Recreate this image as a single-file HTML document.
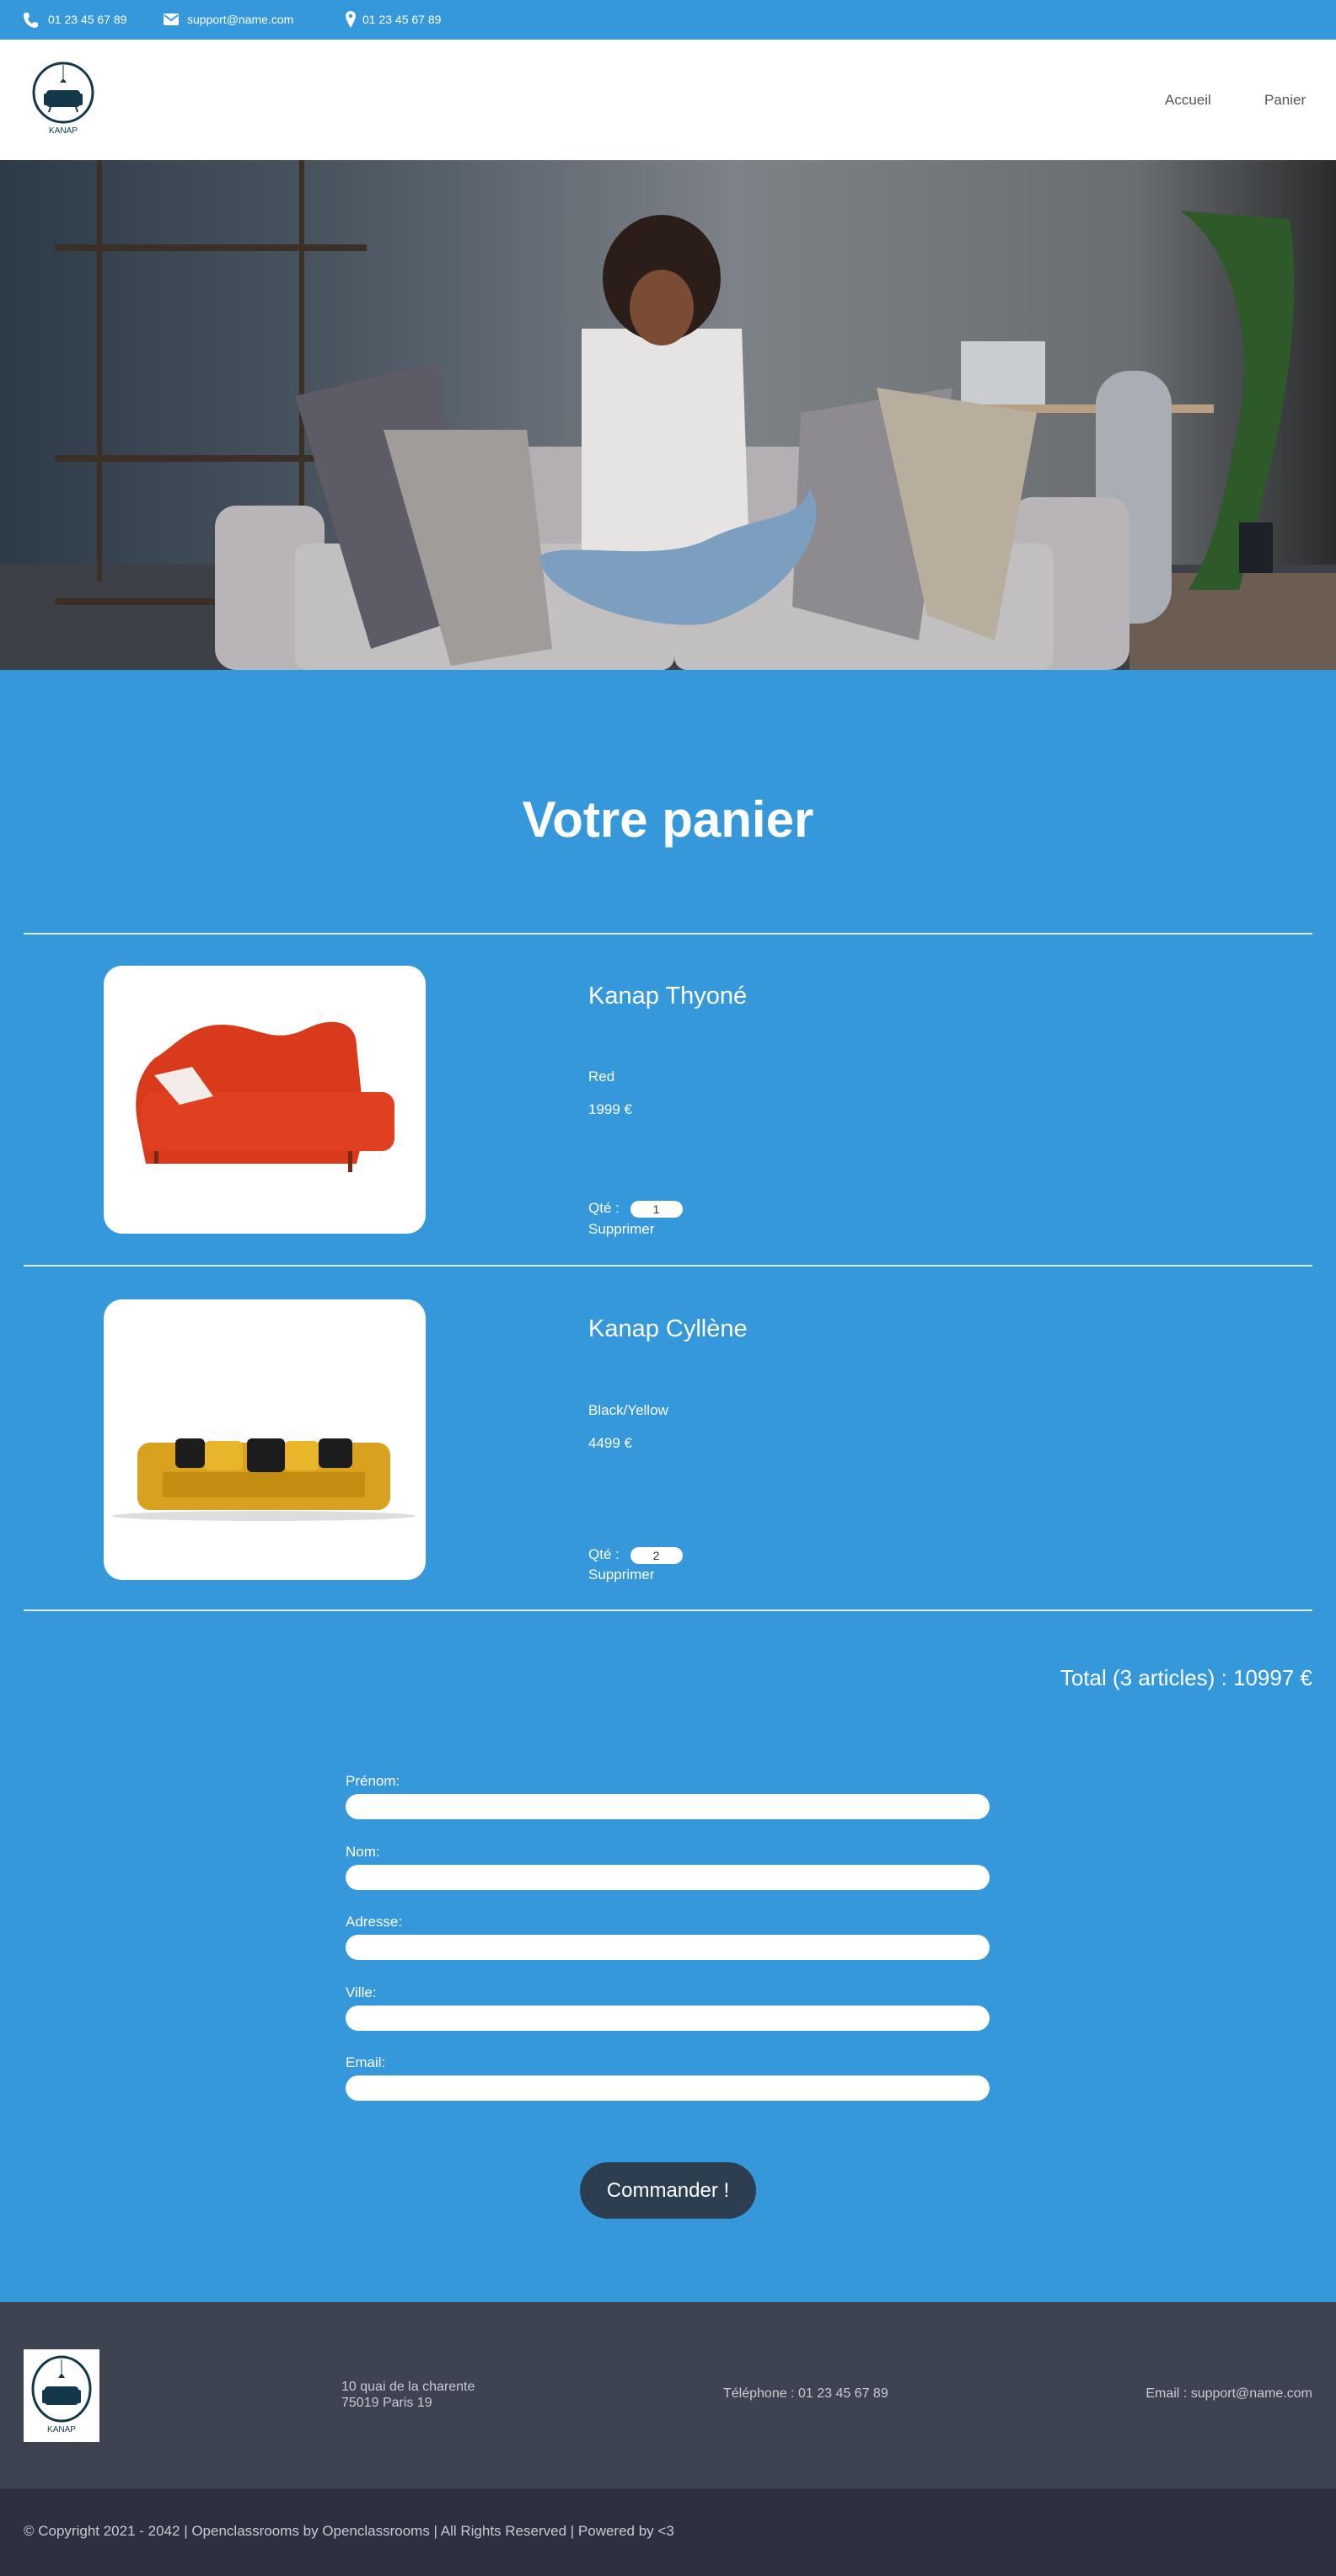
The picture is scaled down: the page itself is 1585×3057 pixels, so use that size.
<!DOCTYPE html>
<html><head><meta charset="utf-8">
<style>
*{margin:0;padding:0;box-sizing:border-box}
body{width:1585px;height:3057px;font-family:"Liberation Sans",sans-serif;background:#3498db;color:#fff;position:relative;overflow:hidden}
.abs{position:absolute}
.top{left:0;top:0;width:1585px;height:47px;background:#3498db;font-size:14px}
.top span{position:absolute;top:15px}
.head{left:0;top:47px;width:1585px;height:143px;background:#fff}
.nav{font-size:17px;color:#555;top:109px}
.hero{left:0;top:190px;width:1585px;height:605px;overflow:hidden}
h1{position:absolute;left:0;width:1585px;text-align:center;top:938px;font-size:60px;font-weight:bold}
.line{left:28px;width:1529px;height:2px;background:#dfeefa}
.img{left:123px;width:382px;background:#fff;border-radius:22px;overflow:hidden}
.t{left:698px}
.qty{display:inline-block;width:62px;height:20px;background:#fff;border-radius:10px;color:#333;font-size:14px;text-align:center;line-height:20px;margin-left:8px;vertical-align:middle}
.lab{left:410px;font-size:17px}
.inp{left:410px;width:764px;height:30px;background:#fff;border-radius:15px}
.foot{left:0;top:2732px;width:1585px;height:221px;background:#3d4350}
.foot2{left:0;top:2953px;width:1585px;height:104px;background:#2e2f3f}
.ft{color:#c8cbd2;font-size:16px}
</style></head><body>
<div class="abs top">
<svg class="abs" style="left:27px;top:14px" width="18" height="19" viewBox="0 0 18 19"><path d="M3 1l4 0 1 5-2 2c1 3 3 5 5 6l2-2 5 1 0 4c-1 1-2 2-4 2C7 18 1 12 1 4c0-1 1-3 2-3z" fill="#fff"/></svg>
<span style="left:57px">01 23 45 67 89</span>
<svg class="abs" style="left:194px;top:16px" width="18" height="14" viewBox="0 0 18 14"><rect x="0" y="0" width="18" height="14" rx="2" fill="#fff"/><path d="M1 2l8 6 8-6" stroke="#3498db" stroke-width="2" fill="none"/></svg>
<span style="left:222px">support@name.com</span>
<svg class="abs" style="left:410px;top:13px" width="12" height="20" viewBox="0 0 12 20"><path d="M6 0C2.7 0 0 2.7 0 6c0 4 6 14 6 14s6-10 6-14C12 2.7 9.3 0 6 0z" fill="#fff"/><circle cx="6" cy="6" r="2.2" fill="#3498db"/></svg>
<span style="left:430px">01 23 45 67 89</span>
</div>
<div class="abs head">
<svg class="abs" style="left:38px;top:26px" width="76" height="90" viewBox="0 0 76 90"><ellipse cx="37" cy="37" rx="35" ry="35" fill="none" stroke="#12384a" stroke-width="3"/><line x1="37" y1="4" x2="37" y2="20" stroke="#12384a"/><path d="M33 25l4-5 4 5z" fill="#12384a"/><rect x="17" y="34" width="40" height="20" rx="4" fill="#12384a"/><rect x="14" y="38" width="6" height="14" rx="2" fill="#12384a"/><rect x="54" y="38" width="6" height="14" rx="2" fill="#12384a"/><line x1="22" y1="54" x2="20" y2="60" stroke="#12384a" stroke-width="2"/><line x1="52" y1="54" x2="54" y2="60" stroke="#12384a" stroke-width="2"/><text x="37" y="85" font-size="10" fill="#12384a" text-anchor="middle" font-family="Liberation Sans">KANAP</text></svg>
</div>
<div class="abs nav" style="left:1382px">Accueil</div>
<div class="abs nav" style="left:1500px">Panier</div>
<div class="abs hero">
<svg width="1585" height="605" viewBox="0 0 1585 605">
<defs><linearGradient id="w" x1="0" x2="1"><stop offset="0" stop-color="#2d3a48"/><stop offset=".25" stop-color="#4a5560"/><stop offset=".55" stop-color="#7d8288"/><stop offset=".85" stop-color="#6a6e70"/><stop offset="1" stop-color="#2a2c2e"/></linearGradient></defs>
<rect width="1585" height="605" fill="url(#w)"/>
<rect x="0" y="480" width="1585" height="125" fill="#3d4046"/>
<rect x="1340" y="490" width="245" height="115" fill="#6b5d52"/>
<g fill="#3a3026"><rect x="65" y="100" width="370" height="8"/><rect x="65" y="350" width="370" height="8"/><rect x="65" y="520" width="250" height="8"/><rect x="115" y="0" width="6" height="500"/><rect x="355" y="0" width="6" height="500"/></g>
<path d="M1400 60c60 40 90 150 70 250s-30 150-60 200h60c40-150 80-300 60-440z" fill="#2e5a2a"/>
<rect x="1470" y="430" width="40" height="60" fill="#1e2228"/>
<rect x="1140" y="215" width="100" height="75" fill="#c9ccd0"/>
<rect x="1150" y="290" width="290" height="10" fill="#b89f82"/>
<rect x="1300" y="250" width="90" height="300" rx="40" fill="#a9adb4"/>
<rect x="440" y="340" width="700" height="250" rx="20" fill="#b3afb2"/>
<rect x="255" y="410" width="130" height="195" rx="25" fill="#b8b4b7"/>
<rect x="1200" y="400" width="140" height="205" rx="25" fill="#b8b4b7"/>
<rect x="350" y="455" width="450" height="150" rx="15" fill="#c2bfc1"/>
<rect x="800" y="455" width="450" height="150" rx="15" fill="#c2bfc1"/>
<path d="M350 280l170-40 40 300-120 40z" fill="#5d5b66"/>
<path d="M455 320l170 0 30 260-120 20z" fill="#a19c9a"/>
<path d="M950 300l180-30-40 300-150-40z" fill="#8d8b90"/>
<path d="M1040 270l190 30-50 270-80-30z" fill="#b8ae9e"/>
<path d="M690 200l190 0 10 300-200 0z" fill="#e6e4e2"/>
<ellipse cx="785" cy="140" rx="70" ry="75" fill="#2b1e18"/>
<ellipse cx="785" cy="175" rx="38" ry="45" fill="#7a4b35"/>
<path d="M640 470c30-20 140 10 200-20s110-20 120-60c30 40-20 130-120 160-70 10-200-30-200-80z" fill="#7c9fc0"/>
</svg>
</div>
<h1>Votre panier</h1>
<div class="abs line" style="top:1107px"></div>
<div class="abs img" style="top:1146px;height:318px">
<svg width="382" height="318" viewBox="0 0 382 318"><path d="M60 110c20-10 40-40 80-40 40 0 60 25 100 5 30-15 60-10 60 20l10 100-10 40H50l-10-50c-5-30 0-55 20-75z" fill="#d93a1b"/><rect x="45" y="150" width="300" height="70" rx="15" fill="#e0401f"/><path d="M60 130l45-10 25 35-40 10z" fill="#f3ece8"/><rect x="60" y="220" width="5" height="15" fill="#7a2a14"/><rect x="290" y="220" width="5" height="25" fill="#7a2a14"/></svg>
</div>
<div class="abs t" style="top:1166px;font-size:29px">Kanap Thyoné</div>
<div class="abs t" style="top:1268px;font-size:17px">Red</div>
<div class="abs t" style="top:1307px;font-size:17px">1999 €</div>
<div class="abs t" style="top:1424px;font-size:17px">Qté : <span class="qty">1</span></div>
<div class="abs t" style="top:1449px;font-size:17px">Supprimer</div>
<div class="abs line" style="top:1501px"></div>
<div class="abs img" style="top:1542px;height:333px">
<svg width="382" height="333" viewBox="0 0 382 333"><ellipse cx="190" cy="257" rx="180" ry="6" fill="#ddd"/><rect x="40" y="170" width="300" height="80" rx="15" fill="#d9a11d"/><rect x="70" y="205" width="240" height="30" fill="#c48d12"/><g fill="#1d1d1d"><rect x="85" y="165" width="35" height="35" rx="6"/><rect x="170" y="165" width="45" height="40" rx="6"/><rect x="255" y="165" width="40" height="35" rx="6"/></g><g fill="#e9b52a"><rect x="120" y="168" width="45" height="35" rx="6"/><rect x="215" y="168" width="40" height="35" rx="6"/></g></svg>
</div>
<div class="abs t" style="top:1561px;font-size:29px">Kanap Cyllène</div>
<div class="abs t" style="top:1664px;font-size:17px">Black/Yellow</div>
<div class="abs t" style="top:1703px;font-size:17px">4499 €</div>
<div class="abs t" style="top:1835px;font-size:17px">Qté : <span class="qty">2</span></div>
<div class="abs t" style="top:1859px;font-size:17px">Supprimer</div>
<div class="abs line" style="top:1910px"></div>
<div class="abs" style="right:28px;top:1976px;font-size:26px">Total (3 articles) : 10997 €</div>
<div class="abs lab" style="top:2104px">Prénom:</div><div class="abs inp" style="top:2129px"></div>
<div class="abs lab" style="top:2188px">Nom:</div><div class="abs inp" style="top:2213px"></div>
<div class="abs lab" style="top:2271px">Adresse:</div><div class="abs inp" style="top:2296px"></div>
<div class="abs lab" style="top:2355px">Ville:</div><div class="abs inp" style="top:2380px"></div>
<div class="abs lab" style="top:2438px">Email:</div><div class="abs inp" style="top:2463px"></div>
<div class="abs" style="left:688px;top:2566px;width:209px;height:67px;background:#2c3e50;border-radius:34px;text-align:center;line-height:67px;font-size:24px">Commander !</div>
<div class="abs foot"></div>
<div class="abs foot2"></div>
<div class="abs" style="left:28px;top:2788px;width:90px;height:110px;background:#fff">
<svg width="90" height="110" viewBox="0 0 90 110"><ellipse cx="45" cy="47" rx="34" ry="38" fill="none" stroke="#12384a" stroke-width="3"/><line x1="45" y1="12" x2="45" y2="28" stroke="#12384a"/><path d="M41 34l4-6 4 6z" fill="#12384a"/><rect x="25" y="44" width="40" height="22" rx="4" fill="#12384a"/><rect x="22" y="48" width="6" height="16" rx="2" fill="#12384a"/><rect x="62" y="48" width="6" height="16" rx="2" fill="#12384a"/><text x="45" y="98" font-size="10" fill="#12384a" text-anchor="middle" font-family="Liberation Sans">KANAP</text></svg>
</div>
<div class="abs ft" style="left:405px;top:2823px;line-height:19px">10 quai de la charente<br>75019 Paris 19</div>
<div class="abs ft" style="left:858px;top:2832px">Téléphone : 01 23 45 67 89</div>
<div class="abs ft" style="right:28px;top:2832px">Email : support@name.com</div>
<div class="abs ft" style="left:28px;top:2994px;font-size:17px">© Copyright 2021 - 2042 | Openclassrooms by Openclassrooms | All Rights Reserved | Powered by &lt;3</div>
</body></html>
